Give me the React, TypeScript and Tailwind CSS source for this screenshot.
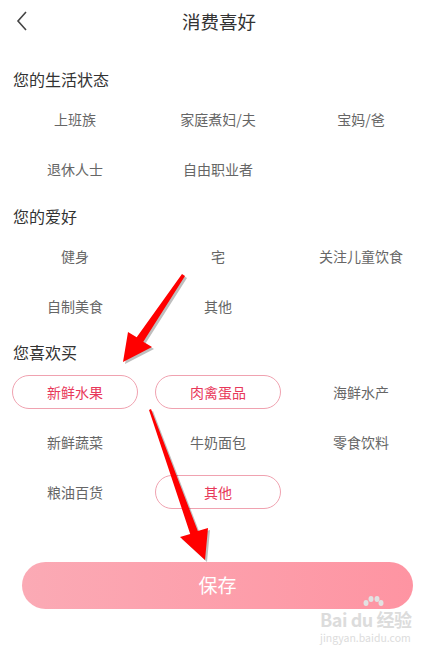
import React from 'react';

type Option = {
    label: string;
    selected?: boolean;
};

const lifeOptions: Option[] = [
    { label: '上班族' },
    { label: '家庭煮妇/夫' },
    { label: '宝妈/爸' },
    { label: '退休人士' },
    { label: '自由职业者' },
];

const hobbyOptions: Option[] = [
    { label: '健身' },
    { label: '宅' },
    { label: '关注儿童饮食' },
    { label: '自制美食' },
    { label: '其他' },
];

const buyOptions: Option[] = [
    { label: '新鲜水果', selected: true },
    { label: '肉禽蛋品', selected: true },
    { label: '海鲜水产' },
    { label: '新鲜蔬菜' },
    { label: '牛奶面包' },
    { label: '零食饮料' },
    { label: '粮油百货' },
    { label: '其他', selected: true },
];

function Section({ title, options, top }: { title: string; options: Option[]; top: string }) {
    return (
        <section className={top}>
            <h2 className="px-[13px] text-[16px] leading-[22px] text-[#333]">{title}</h2>
            <div className="mt-[12px] grid grid-cols-[126px_126px_126px] gap-x-[17px] gap-y-[16px] pl-[12px]">
                {options.map((o) => (
                    <div
                        key={o.label}
                        className={`flex h-[34px] items-center justify-center rounded-full text-[14px] ${
                            o.selected ? 'border border-[#f0a2b0] text-[#e8385a]' : 'text-[#666]'
                        }`}
                    >
                        {o.label}
                    </div>
                ))}
            </div>
        </section>
    );
}

export default function App() {
    return (
        <div
            className="relative h-[655px] w-[438px] overflow-hidden bg-white"
            style={{ fontFamily: '"Noto Sans CJK SC", "Noto Sans", sans-serif' }}
        >
            {/* Top bar */}
            <header className="relative flex h-[44px] items-center justify-center">
                <button className="absolute left-[14px] top-[10px] p-0">
                    <svg width="16" height="22" viewBox="0 0 16 22" fill="none">
                        <polyline points="12,2 4,11 12,20" stroke="#444" strokeWidth="1.6" strokeLinejoin="miter" />
                    </svg>
                </button>
                <h1 className="text-[18.5px] text-[#333]">消费喜好</h1>
            </header>

            <Section title="您的生活状态" options={lifeOptions} top="mt-[24px]" />
            <Section title="您的爱好" options={hobbyOptions} top="mt-[19px]" />
            <Section title="您喜欢买" options={buyOptions} top="mt-[18px]" />

            <div className="mt-[53px] pl-[22px]">
                <button className="flex h-[47px] w-[391px] items-center justify-center rounded-full bg-gradient-to-r from-[#fbaab5] to-[#fe94a2] text-[19px] text-white">
                    保存
                </button>
            </div>

            {/* watermark */}
            <div className="absolute left-[320px] top-[607px] flex select-none flex-col text-[#dcdcdc]">
                <div className="relative h-[24px] text-[18px] font-bold leading-[24px] tracking-tight">
                    Bai du 经验
                    <svg className="absolute left-[42px] top-[-12px]" width="22" height="14" viewBox="0 0 22 14">
                        <g fill="#e2e2e2">
                            <ellipse cx="4" cy="8" rx="2.5" ry="3" />
                            <ellipse cx="9" cy="4" rx="2.5" ry="3" />
                            <ellipse cx="15" cy="4" rx="2.5" ry="3" />
                            <ellipse cx="19" cy="8" rx="2.5" ry="3" />
                        </g>
                    </svg>
                </div>
                <div className="h-[14px] text-[10.5px] leading-[14px]">jingyan.baidu.com</div>
            </div>

            {/* annotation arrows */}
            <svg className="pointer-events-none absolute left-0 top-0" width="438" height="655">
                <g fill="#000" opacity="0.25" transform="translate(2,2)">
                    <polygon points="182,274 185,276 143.3,341.8 152,347 123,362 128,332 136.7,337.2" />
                    <polygon points="149,410 151,409 197.8,531.1 208,528 205,560 180,537 190.2,533.9" />
                </g>
                <g fill="#ff0000">
                    <polygon points="182,274 185,276 143.3,341.8 152,347 123,362 128,332 136.7,337.2" />
                    <polygon points="149,410 151,409 197.8,531.1 208,528 205,560 180,537 190.2,533.9" />
                </g>
            </svg>
        </div>
    );
}
